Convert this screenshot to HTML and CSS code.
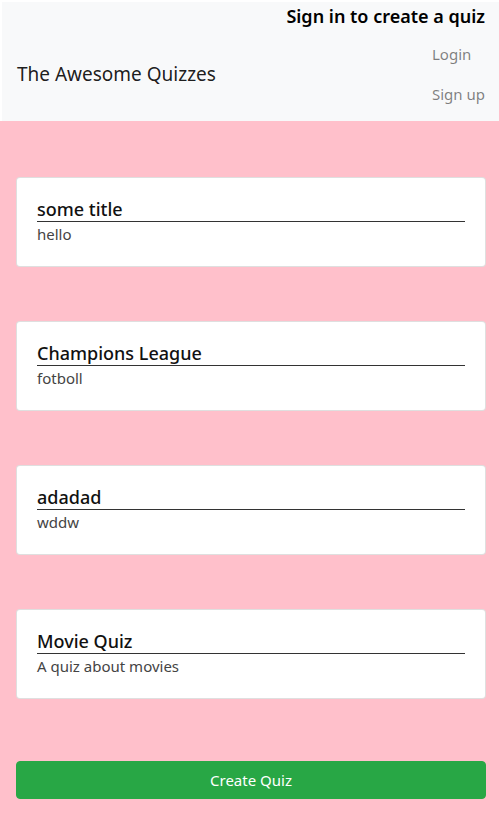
FILE: index.html
```html
<!DOCTYPE html>
<html lang="en">
<head>
<meta charset="utf-8">
<title>The Awesome Quizzes</title>
<link rel="stylesheet" href="styles.css">
</head>
<body>
<header class="navbar">
  <h5 class="signin-title">Sign in to create a quiz</h5>
  <div class="navbar-row">
    <a class="brand" href="#">The Awesome Quizzes</a>
    <ul class="nav">
      <li><a class="nav-link" href="#">Login</a></li>
      <li><a class="nav-link" href="#">Sign up</a></li>
    </ul>
  </div>
</header>
<main class="content">
  <div class="quiz-list">
    <div class="card"><h5 class="card-title">some title</h5><p class="card-text">hello</p></div>
    <div class="card"><h5 class="card-title">Champions League</h5><p class="card-text">fotboll</p></div>
    <div class="card"><h5 class="card-title">adadad</h5><p class="card-text">wddw</p></div>
    <div class="card"><h5 class="card-title">Movie Quiz</h5><p class="card-text">A quiz about movies</p></div>
  </div>
  <button class="btn-create" type="button">Create Quiz</button>
</main>
</body>
</html>
```
FILE: styles.css
```css
* { box-sizing: border-box; }
html, body { margin: 0; padding: 0; }
body {
  font-family: "Noto Sans", "Open Sans", sans-serif;
  font-size: 16px;
  line-height: 1.5;
  color: #212529;
  background: #ffc0cb;
  min-height: 832px;
}
.navbar {
  background: #f8f9fa;
  height: 121px;
  padding: 2px 14px 0 17px;
  border-left: 2px solid #fff;
  border-top: 2px solid #fff;
}
.signin-title {
  margin: 0;
  text-align: right;
  font-size: 18px;
  font-weight: 600;
  line-height: 24px;
  color: #000;
}
.navbar-row {
  display: flex;
  align-items: center;
  justify-content: space-between;
  margin-top: 6px;
}
.brand {
  font-size: 19px;
  color: rgba(0,0,0,.9);
  text-decoration: none;
  line-height: 30px;
  margin-left: -2px;
}
.nav {
  list-style: none;
  margin: 0;
  padding: 0;
  display: flex;
  flex-direction: column;
}
.nav-link {
  display: block;
  padding: 8px 0;
  color: rgba(0,0,0,.5);
  text-decoration: none;
  font-size: 15px;
  line-height: 24px;
  margin-left: -1px;
}
.content {
  padding: 56px 13px 33px 16px;
}
.quiz-list {
  display: flex;
  flex-direction: column;
  gap: 54px;
}
.card {
  background: #fff;
  border: 1px solid rgba(0,0,0,.125);
  border-radius: 4px;
  padding: 20px;
  height: 90px;
}
.card-title {
  margin: 0;
  font-size: 18px;
  font-weight: 500;
  line-height: 23px;
  color: #111;
  border-bottom: 1px solid #333;
}
.card-text {
  margin: 0;
  font-size: 15px;
  line-height: 24px;
  color: #444;
}
.btn-create {
  display: block;
  width: 100%;
  margin-top: 62px;
  height: 38px;
  background: #28a745;
  border: 1px solid #28a745;
  border-radius: 4px;
  color: #fff;
  font-family: inherit;
  font-size: 15px;
  line-height: 24px;
  cursor: pointer;
}
```
